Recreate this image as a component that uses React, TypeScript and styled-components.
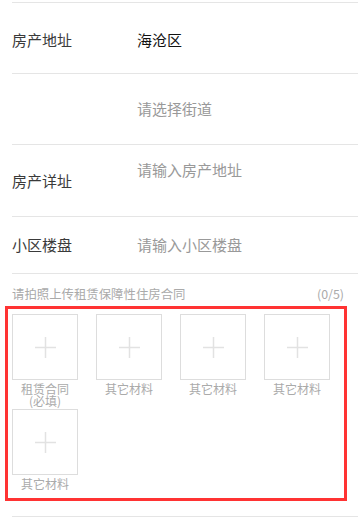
import React from "react"
import styled, { createGlobalStyle } from "styled-components"

const GlobalStyle = createGlobalStyle`
  html, body {
    margin: 0;
    padding: 0;
    background: #fff;
  }
  body {
    font-family: "Noto Sans CJK SC", "Noto Sans", sans-serif;
  }
  * {
    box-sizing: border-box;
  }
`

const Page = styled.div`
  width: 358px;
  padding-top: 2px;
  background: #fff;
`

const Row = styled.div<{ height: number; offset?: number }>`
  display: flex;
  align-items: center;
  margin-left: 12px;
  height: ${({ height }) => height}px;
  padding-top: ${({ offset = 0 }) => offset}px;
  border-top: 1px solid #e5e5e5;
`

const Label = styled.div`
  width: 125px;
  flex-shrink: 0;
  font-size: 15px;
  line-height: 18px;
  color: #3a3a3a;
`

const Value = styled.div<{ placeholder?: boolean }>`
  font-size: 15px;
  line-height: 18px;
  color: ${({ placeholder }) => (placeholder ? "#999" : "#111")};
`

const AreaValue = styled(Value)`
  align-self: flex-start;
  margin-top: 16px;
`

const UploadSection = styled.div`
  padding-top: 13px;
  padding-bottom: 15px;
`

const HintRow = styled.div`
  display: flex;
  justify-content: space-between;
  margin: 0 14px 0 12px;
  font-size: 12.4px;
  line-height: 14px;
  color: #aaa;
`

const UploadGrid = styled.div`
  display: grid;
  grid-template-columns: repeat(4, 66px);
  column-gap: 18px;
  row-gap: 2px;
  align-items: start;
  margin: 5px 0 0 5px;
  width: 342px;
  padding: 5px 0 8px 4px;
  border: 3px solid #f33;
`

const UploadItem = styled.div`
  display: flex;
  flex-direction: column;
  align-items: center;
  width: 66px;
`

const UploadBox = styled.div`
  display: flex;
  align-items: center;
  justify-content: center;
  width: 66px;
  height: 66px;
  border: 1px solid #ddd;
`

const ItemLabel = styled.div`
  margin-top: 3px;
  font-size: 12px;
  line-height: 12px;
  color: #aaa;
  text-align: center;
  white-space: pre-line;
`

const BottomLine = styled.div`
  margin-left: 12px;
  border-top: 1px solid #e5e5e5;
`

const PlusIcon = () => (
  <svg width="21" height="21" viewBox="0 0 21 21">
    <path d="M10.5 0V21M0 10.5H21" stroke="#e2e2e2" strokeWidth="1.5" fill="none" />
  </svg>
)

const uploads = ["租赁合同\n(必填)", "其它材料", "其它材料", "其它材料", "其它材料"]

export default function App() {
  return (
    <Page>
      <GlobalStyle />
      <Row height={71} offset={4}>
        <Label>房产地址</Label>
        <Value>海沧区</Value>
      </Row>
      <Row height={71}>
        <Label />
        <Value placeholder>请选择街道</Value>
      </Row>
      <Row height={72}>
        <Label>房产详址</Label>
        <AreaValue placeholder>请输入房产地址</AreaValue>
      </Row>
      <Row height={57}>
        <Label>小区楼盘</Label>
        <Value placeholder>请输入小区楼盘</Value>
      </Row>
      <BottomLine />
      <UploadSection>
        <HintRow>
          <span>请拍照上传租赁保障性住房合同</span>
          <span>(0/5)</span>
        </HintRow>
        <UploadGrid>
          {uploads.map((name, i) => (
            <UploadItem key={i}>
              <UploadBox>
                <PlusIcon />
              </UploadBox>
              <ItemLabel>{name}</ItemLabel>
            </UploadItem>
          ))}
        </UploadGrid>
      </UploadSection>
      <BottomLine />
    </Page>
  )
}
